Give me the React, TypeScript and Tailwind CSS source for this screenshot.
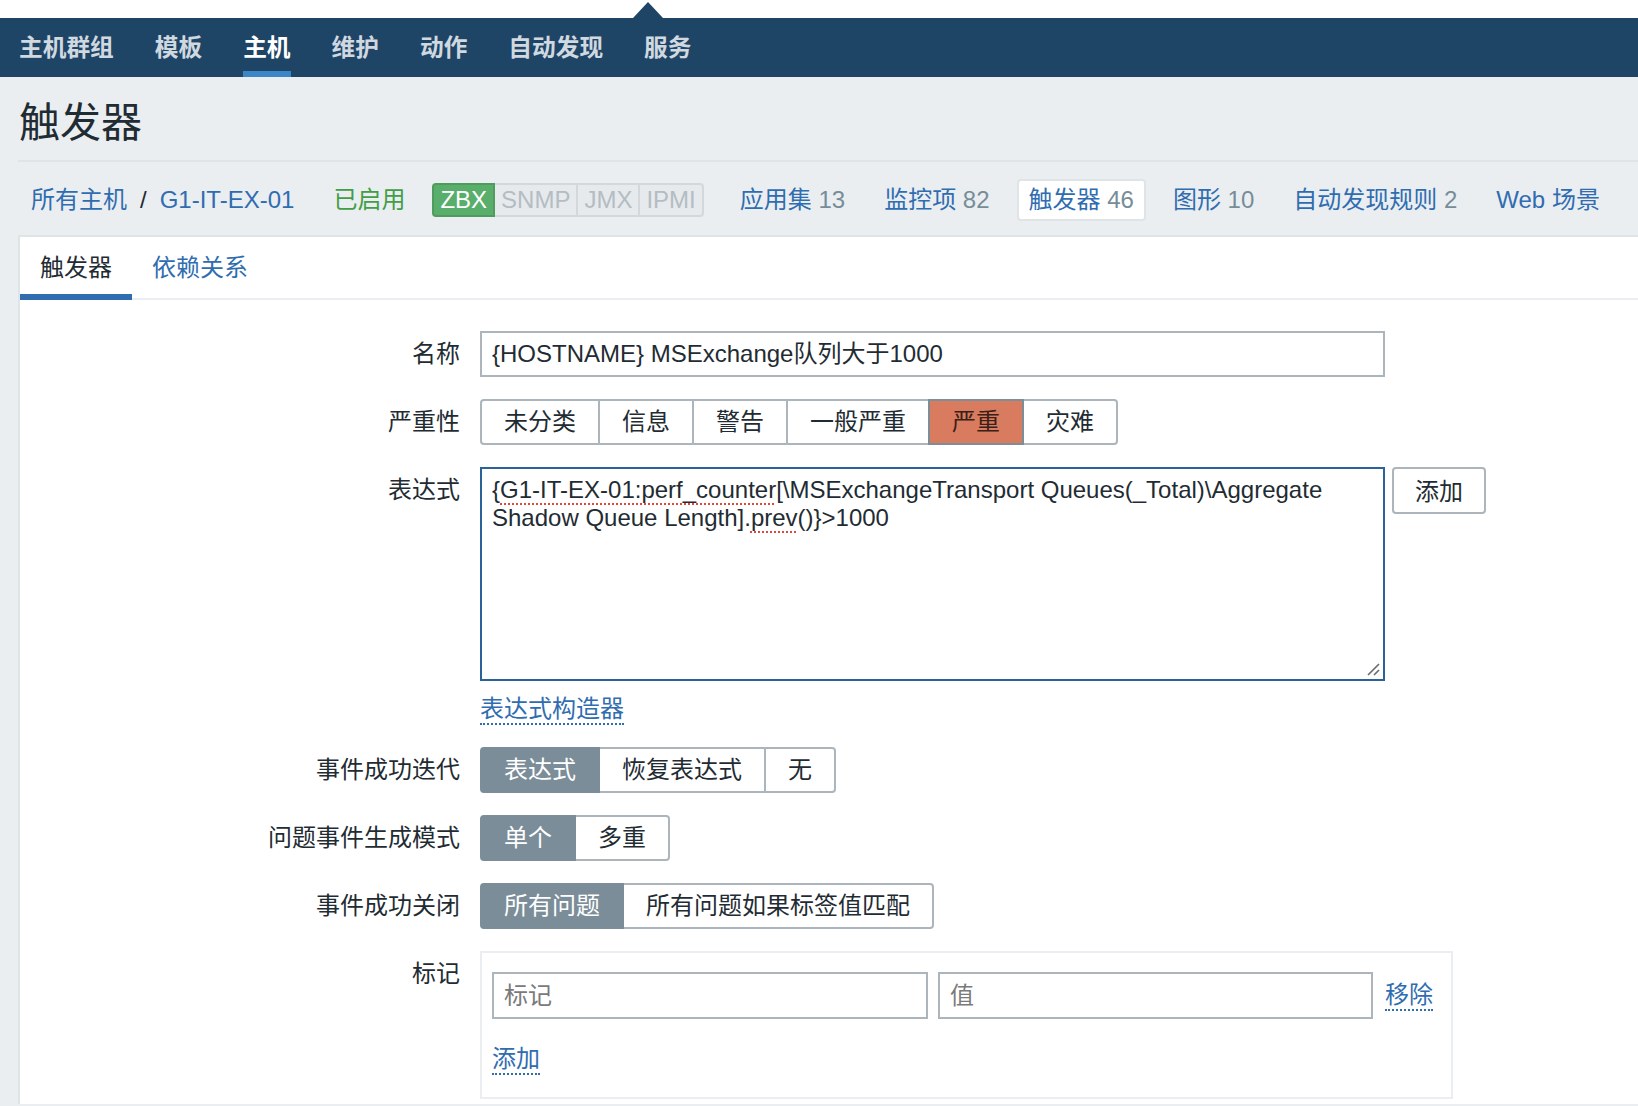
const navItems = ["主机群组", "模板", "主机", "维护", "动作", "自动发现", "服务"];

function Seg({
  items,
  active,
  activeClass,
  wide,
}: {
  items: string[];
  active: number;
  activeClass: string;
  wide?: Record<number, string>;
}) {
  return (
    <div className="flex h-[46px]">
      {items.map((t, i) => {
        const on = i === active;
        return (
          <div
            key={t}
            className={
              "relative flex h-full items-center justify-center border-2 px-[22px] text-[24px] " +
              (i > 0 ? "-ml-[2px] " : "") +
              (i === 0 ? "rounded-l-[4px] " : "") +
              (i === items.length - 1 ? "rounded-r-[4px] " : "") +
              (on ? activeClass + " z-10" : "border-[#acb5bc] bg-white text-[#1f2c33]") +
              " " +
              (wide?.[i] ?? "")
            }
          >
            {t}
          </div>
        );
      })}
    </div>
  );
}

function Label({ children, top }: { children: string; top?: boolean }) {
  return (
    <div
      className={
        "flex justify-end text-[24px] leading-[28px] text-[#1f2c33] " +
        (top ? "items-start pt-[9px]" : "items-center")
      }
    >
      {children}
    </div>
  );
}

function Crumb({ name, count }: { name: string; count?: string }) {
  return (
    <span className="px-[12px] text-[24px] text-[#2f6db0]">
      {name}
      {count && <span className="text-[#768d99]"> {count}</span>}
    </span>
  );
}

export default function App() {
  return (
    <div className="min-h-screen bg-[#ebeef0] font-['Liberation_Sans','Noto_Sans_CJK_SC',sans-serif] text-[#1f2c33]">
      {/* top strip with the menu pointer */}
      <div className="relative h-[18px] bg-white">
        <div className="absolute left-[633px] top-[2px] h-0 w-0 border-x-[15px] border-b-[16px] border-x-transparent border-b-[#1f4566]" />
      </div>
      <nav className="flex h-[59px] gap-[41px] bg-[#1f4566] pl-[19px]">
        {navItems.map((t) => (
          <div key={t} className="relative flex h-full items-center pt-[2px]">
            <span
              className={
                "text-[23.7px] font-semibold " +
                (t === "主机" ? "text-white" : "text-[#d0d8e0]")
              }
            >
              {t}
            </span>
            {t === "主机" && (
              <div className="absolute bottom-0 left-0 right-0 h-[6px] bg-[#3c85c6]" />
            )}
          </div>
        ))}
      </nav>

      <div className="flex h-[83px] items-center pl-[19px] pt-[10px]">
        <h1 className="text-[41px] leading-none font-normal">触发器</h1>
      </div>
      <div className="ml-[18px] border-t-2 border-[#dfe4e7]" />

      {/* breadcrumbs + host tabs */}
      <div className="flex h-[73px] items-center gap-[15px] pl-[19px] pt-[2px]">
        <span className="px-[12px] text-[24px] text-[#2f6db0]">
          所有主机
          <span className="mx-[13px] text-[#1f2c33]">/</span>
          G1-IT-EX-01
        </span>
        <span className="px-[12px] text-[24px] text-[#429e47]">已启用</span>
        <div className="mr-[9px] flex text-[24px] leading-[30px]">
          <span className="rounded-l-[4px] border-2 border-[#4f9c5e] bg-[#59ae6b] px-[6px] text-white">
            ZBX
          </span>
          <span className="border-y-2 border-r-2 border-[#d2d8dc] bg-[#e7eaec] px-[6px] text-[#b3bdc3]">
            SNMP
          </span>
          <span className="border-y-2 border-r-2 border-[#d2d8dc] bg-[#e7eaec] px-[6px] text-[#b3bdc3]">
            JMX
          </span>
          <span className="rounded-r-[4px] border-y-2 border-r-2 border-[#d2d8dc] bg-[#e7eaec] px-[6px] text-[#b3bdc3]">
            IPMI
          </span>
        </div>
        <Crumb name="应用集" count="13" />
        <Crumb name="监控项" count="82" />
        <span className="flex h-[42px] items-center rounded-[4px] border-2 border-[#dfe4e7] bg-white px-[10px] text-[24px] text-[#2f6db0]">
          触发器<span className="text-[#768d99]">&nbsp;46</span>
        </span>
        <Crumb name="图形" count="10" />
        <Crumb name="自动发现规则" count="2" />
        <Crumb name="Web 场景" />
      </div>

      {/* main panel */}
      <div className="ml-[18px] min-h-[869px] border-l-2 border-t-2 border-[#dfe4e7] bg-white">
        <div className="flex h-[63px] border-b-2 border-[#ebeef0]">
          <div className="relative flex h-full items-center px-[20px] text-[24px] text-[#1f2c33]">
            触发器
            <div className="absolute -bottom-[2px] left-0 right-0 h-[6px] bg-[#2f6db0]" />
          </div>
          <div className="flex h-full items-center px-[20px] text-[24px] text-[#2f6db0]">
            依赖关系
          </div>
        </div>

        <div className="grid grid-cols-[440px_1fr] gap-x-[20px] gap-y-[22px] pt-[31px]">
          <Label>名称</Label>
          <div className="flex h-[46px] w-[905px] items-center border-2 border-[#acb5bc] px-[10px] text-[24px]">
            {"{HOSTNAME} MSExchange队列大于1000"}
          </div>

          <Label>严重性</Label>
          <Seg
            items={["未分类", "信息", "警告", "一般严重", "严重", "灾难"]}
            active={4}
            activeClass="border-[#7d8e99] bg-[#d97b5f] text-[#3a2019]"
          />

          <Label top>表达式</Label>
          <div>
            <div className="flex items-start gap-[7px]">
              <div className="relative h-[214px] w-[905px] border-2 border-[#2b6399] px-[10px] pt-[7px] text-[24px] leading-[28px] text-[#1f2c33]">
                <div className="whitespace-nowrap">
                  {"{"}
                  <span className="underline decoration-[#e0473d] decoration-dotted decoration-2 underline-offset-[5px]">
                    G1-IT-EX-01:perf_counter
                  </span>
                  [\MSExchangeTransport Queues(_Total)\Aggregate
                </div>
                <div className="whitespace-nowrap">
                  Shadow Queue Length].
                  <span className="underline decoration-[#e0473d] decoration-dotted decoration-2 underline-offset-[5px]">
                    prev
                  </span>
                  {"()}>1000"}
                </div>
                <svg
                  className="absolute bottom-[3px] right-[3px]"
                  width="14"
                  height="14"
                  viewBox="0 0 14 14"
                >
                  <path d="M2 13 L13 2 M8 13 L13 8" stroke="#6b6b6b" strokeWidth="1.6" fill="none" />
                </svg>
              </div>
              <div className="flex h-[47px] w-[94px] items-center justify-center rounded-[4px] border-2 border-[#acb5bc] bg-white pt-[2px] text-[24px]">
                添加
              </div>
            </div>
            <div className="mt-[14px]">
              <span className="inline-block border-b-2 border-dotted border-[#2f6db0] text-[24px] leading-[28px] text-[#2f6db0]">
                表达式构造器
              </span>
            </div>
          </div>

          <Label>事件成功迭代</Label>
          <Seg
            items={["表达式", "恢复表达式", "无"]}
            active={0}
            activeClass="border-[#7b8d99] bg-[#7b8d99] text-white"
          />

          <Label>问题事件生成模式</Label>
          <Seg
            items={["单个", "多重"]}
            active={0}
            activeClass="border-[#7b8d99] bg-[#7b8d99] text-white"
          />

          <Label>事件成功关闭</Label>
          <Seg
            items={["所有问题", "所有问题如果标签值匹配"]}
            active={0}
            activeClass="border-[#7b8d99] bg-[#7b8d99] text-white"
            wide={{ 1: "w-[312px]" }}
          />

          <Label top>标记</Label>
          <div className="h-[148px] w-[973px] border-2 border-[#ebeef0] px-[10px] pt-[19px]">
            <div className="flex items-center">
              <div className="flex h-[47px] w-[436px] items-center border-2 border-[#acb5bc] px-[10px] text-[24px] text-[#7a7a7a]">
                标记
              </div>
              <div className="ml-[10px] flex h-[47px] w-[435px] items-center border-2 border-[#acb5bc] px-[10px] text-[24px] text-[#7a7a7a]">
                值
              </div>
              <span className="ml-[12px] border-b-2 border-dotted border-[#2f6db0] text-[24px] leading-[28px] text-[#2f6db0]">
                移除
              </span>
            </div>
            <div className="mt-[26px]">
              <span className="inline-block border-b-2 border-dotted border-[#2f6db0] text-[24px] leading-[28px] text-[#2f6db0]">
                添加
              </span>
            </div>
          </div>
        </div>
      </div>
    </div>
  );
}
